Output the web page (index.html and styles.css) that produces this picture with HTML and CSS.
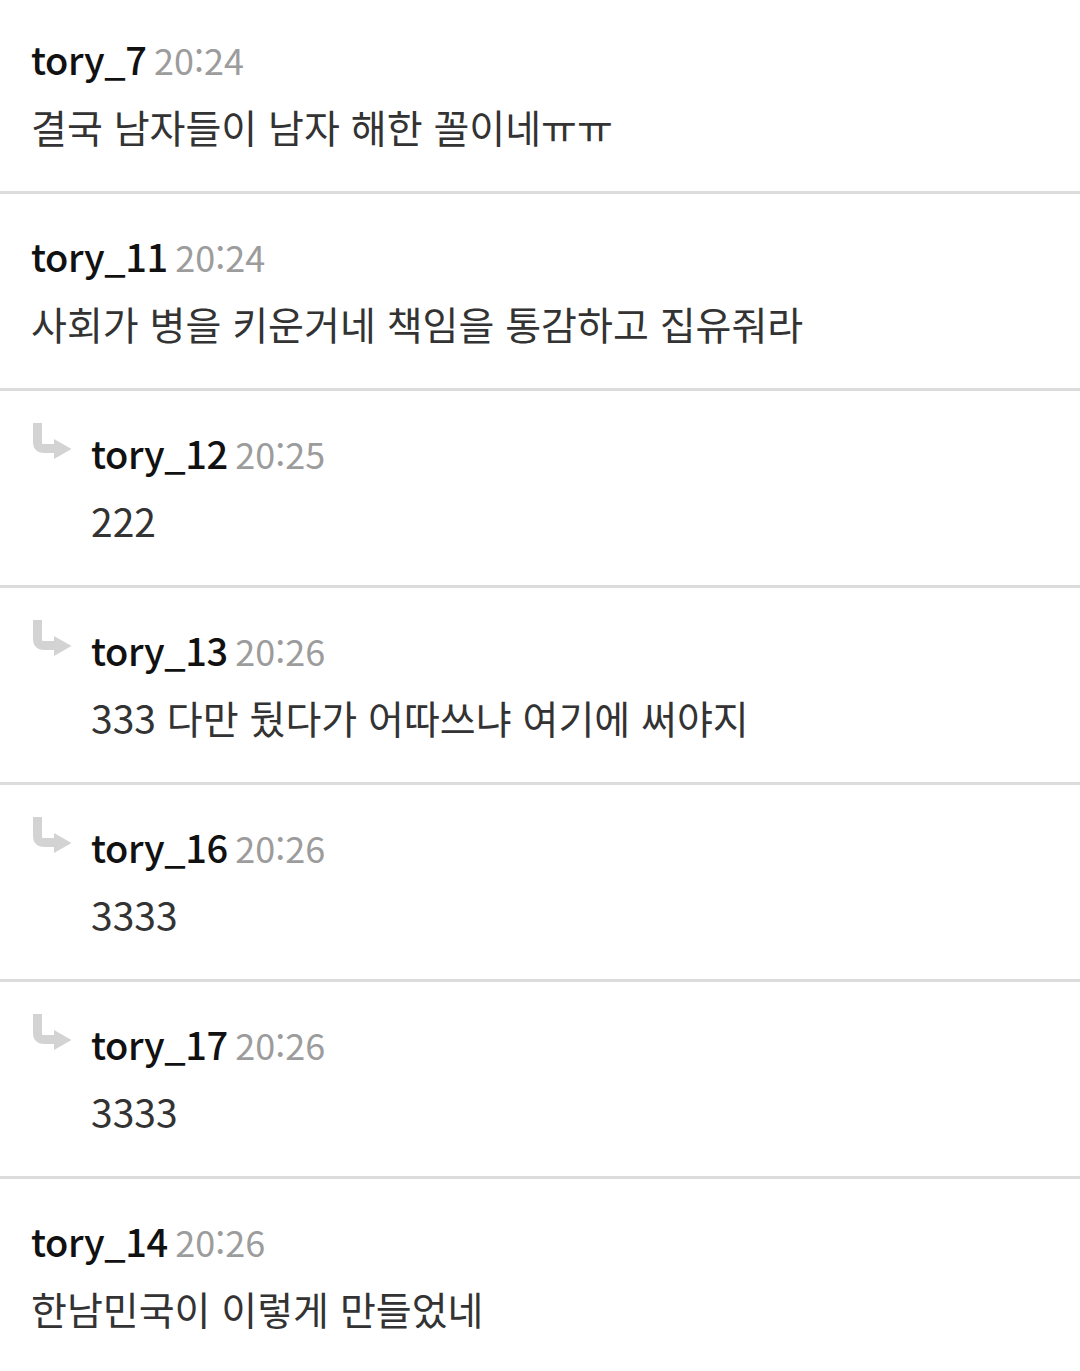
FILE: index.html
```html
<!DOCTYPE html>
<html lang="ko">
<head>
<meta charset="utf-8">
<link rel="stylesheet" href="styles.css">
</head>
<body>
<ul class="comments">
  <li class="comment">
    <div class="head"><span class="name">tory_7</span> <span class="time">20:24</span></div>
    <div class="text">결국 남자들이 남자 해한 꼴이네ㅠㅠ</div>
  </li>
  <li class="comment">
    <div class="head"><span class="name">tory_11</span> <span class="time">20:24</span></div>
    <div class="text">사회가 병을 키운거네 책임을 통감하고 집유줘라</div>
  </li>
  <li class="comment reply">
    <svg class="arrow" viewBox="0 0 40 40" width="40" height="40"><path d="M4.5 2 V21 Q4.5 27.5 11 27.5 H24" fill="none" stroke="#d3d3d3" stroke-width="9"/><path d="M21 18 L38.5 28 L21 38 Z" fill="#d3d3d3"/></svg>
    <div class="body">
      <div class="head"><span class="name">tory_12</span> <span class="time">20:25</span></div>
      <div class="text">222</div>
    </div>
  </li>
  <li class="comment reply">
    <svg class="arrow" viewBox="0 0 40 40" width="40" height="40"><path d="M4.5 2 V21 Q4.5 27.5 11 27.5 H24" fill="none" stroke="#d3d3d3" stroke-width="9"/><path d="M21 18 L38.5 28 L21 38 Z" fill="#d3d3d3"/></svg>
    <div class="body">
      <div class="head"><span class="name">tory_13</span> <span class="time">20:26</span></div>
      <div class="text">333 다만 뒀다가 어따쓰냐 여기에 써야지</div>
    </div>
  </li>
  <li class="comment reply">
    <svg class="arrow" viewBox="0 0 40 40" width="40" height="40"><path d="M4.5 2 V21 Q4.5 27.5 11 27.5 H24" fill="none" stroke="#d3d3d3" stroke-width="9"/><path d="M21 18 L38.5 28 L21 38 Z" fill="#d3d3d3"/></svg>
    <div class="body">
      <div class="head"><span class="name">tory_16</span> <span class="time">20:26</span></div>
      <div class="text">3333</div>
    </div>
  </li>
  <li class="comment reply">
    <svg class="arrow" viewBox="0 0 40 40" width="40" height="40"><path d="M4.5 2 V21 Q4.5 27.5 11 27.5 H24" fill="none" stroke="#d3d3d3" stroke-width="9"/><path d="M21 18 L38.5 28 L21 38 Z" fill="#d3d3d3"/></svg>
    <div class="body">
      <div class="head"><span class="name">tory_17</span> <span class="time">20:26</span></div>
      <div class="text">3333</div>
    </div>
  </li>
  <li class="comment">
    <div class="head"><span class="name">tory_14</span> <span class="time">20:26</span></div>
    <div class="text">한남민국이 이렇게 만들었네</div>
  </li>
</ul>
</body>
</html>
```

FILE: styles.css
```css
html, body {
  margin: 0;
  padding: 0;
  background: #fff;
}
body {
  font-family: "Noto Sans CJK KR", "Noto Sans", sans-serif;
}
.comments {
  list-style: none;
  margin: -3px 0 0;
  padding: 0;
}
.comment {
  display: flex;
  flex-direction: column;
  align-items: flex-start;
  height: 197px;
  box-sizing: border-box;
  padding: 38px 31px 0;
  border-bottom: 3px solid #dcdcdc;
}
.comment.reply {
  flex-direction: row;
  padding-left: 33px;
}
.arrow {
  flex: none;
  margin-top: -8px;
  margin-right: 18px;
}
.head {
  line-height: 48px;
  white-space: nowrap;
}
.name {
  font-size: 38px;
  font-weight: 500;
  color: #111;
  letter-spacing: -0.4px;
}
.time {
  margin-left: 3px;
  font-size: 36px;
  font-weight: 400;
  color: #9c9c9c;
}
.text {
  margin-top: 10px;
  font-size: 39px;
  line-height: 48px;
  color: #333;
}
```
